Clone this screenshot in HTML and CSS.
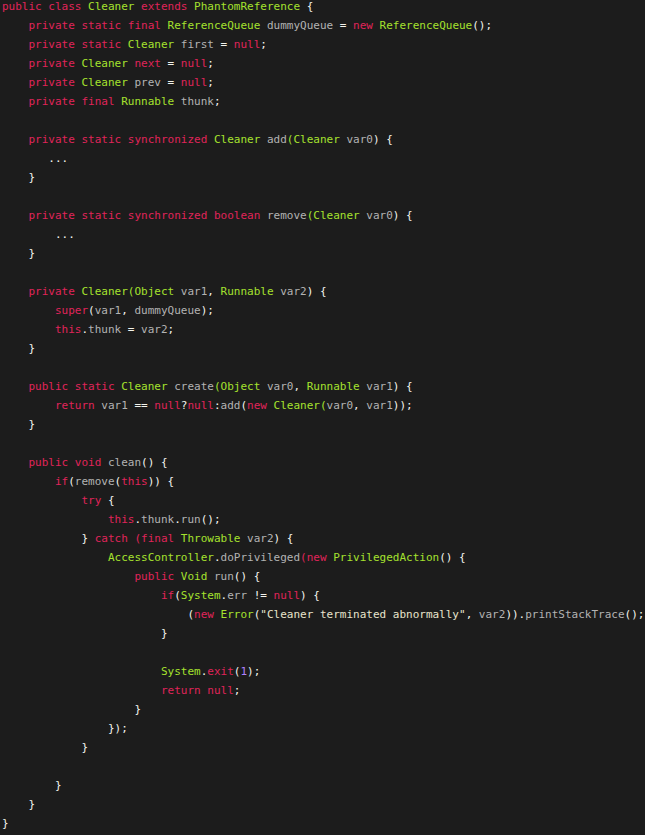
FILE: index.html
```html
<!DOCTYPE html>
<html>
<head>
<meta charset="utf-8">
<link rel="stylesheet" href="styles.css">
</head>
<body>
<pre class="code"><span class="k">public class</span> <span class="t">Cleaner</span> <span class="k">extends</span> <span class="t">PhantomReference</span> <span class="p">{</span>
    <span class="k">private static final</span> <span class="t">ReferenceQueue</span> dummyQueue <span class="p">=</span> <span class="k">new</span> <span class="t">ReferenceQueue</span><span class="p">();</span>
    <span class="k">private static</span> <span class="t">Cleaner</span> first <span class="p">=</span> <span class="k">null</span><span class="p">;</span>
    <span class="k">private</span> <span class="t">Cleaner</span> <span class="k">next</span> <span class="p">=</span> <span class="k">null</span><span class="p">;</span>
    <span class="k">private</span> <span class="t">Cleaner</span> prev <span class="p">=</span> <span class="k">null</span><span class="p">;</span>
    <span class="k">private final</span> <span class="t">Runnable</span> thunk<span class="p">;</span>

    <span class="k">private static synchronized</span> <span class="t">Cleaner</span> add<span class="t">(Cleaner</span> var0<span class="p">) {</span>
       <span class="p">...</span>
    <span class="p">}</span>

    <span class="k">private static synchronized boolean</span> remove<span class="t">(Cleaner</span> var0<span class="p">) {</span>
        <span class="p">...</span>
    <span class="p">}</span>

    <span class="k">private</span> <span class="t">Cleaner(Object</span> var1<span class="p">,</span> <span class="t">Runnable</span> var2<span class="p">) {</span>
        <span class="k">super</span><span class="p">(</span>var1<span class="p">,</span> dummyQueue<span class="p">);</span>
        <span class="k">this</span><span class="p">.</span>thunk <span class="p">=</span> var2<span class="p">;</span>
    <span class="p">}</span>

    <span class="k">public static</span> <span class="t">Cleaner</span> create<span class="t">(Object</span> var0<span class="p">,</span> <span class="t">Runnable</span> var1<span class="p">) {</span>
        <span class="k">return</span> var1 <span class="p">==</span> <span class="k">null</span><span class="p">?</span><span class="k">null</span><span class="p">:</span>add<span class="p">(</span><span class="k">new</span> <span class="t">Cleaner(</span>var0<span class="p">,</span> var1<span class="p">));</span>
    <span class="p">}</span>

    <span class="k">public void</span> clean<span class="p">() {</span>
        <span class="k">if</span><span class="p">(</span>remove<span class="p">(</span><span class="k">this</span><span class="p">)) {</span>
            <span class="k">try</span> <span class="p">{</span>
                <span class="k">this</span><span class="p">.</span>thunk<span class="p">.</span>run<span class="p">();</span>
            <span class="p">}</span> <span class="k">catch (final</span> <span class="t">Throwable</span> var2<span class="p">) {</span>
                <span class="t">AccessController</span><span class="p">.</span>doPrivileged<span class="k">(new</span> <span class="t">PrivilegedAction</span><span class="p">() {</span>
                    <span class="k">public</span> <span class="t">Void</span> run<span class="p">() {</span>
                        <span class="k">if</span><span class="p">(</span><span class="t">System</span><span class="p">.</span>err <span class="p">!=</span> <span class="k">null</span><span class="p">) {</span>
                            <span class="p">(</span><span class="k">new</span> <span class="t">Error</span><span class="p">(</span><span class="s">"Cleaner terminated abnormally"</span><span class="p">,</span> var2<span class="p">)).</span>printStackTrace<span class="p">();</span>
                        <span class="p">}</span>

                        <span class="t">System</span><span class="p">.</span><span class="k">exit</span><span class="p">(</span><span class="n">1</span><span class="p">);</span>
                        <span class="k">return null</span><span class="p">;</span>
                    <span class="p">}</span>
                <span class="p">});</span>
            <span class="p">}</span>

        <span class="p">}</span>
    <span class="p">}</span>
<span class="p">}</span></pre>
</body>
</html>
```
FILE: styles.css
```css
html, body {
  margin: 0;
  padding: 0;
  background: #1c1c1c;
  overflow: hidden;
}
.code {
  margin: -3px 0 0 0;
  padding: 0 0 0 2px;
  font-family: "DejaVu Sans Mono", "Liberation Mono", monospace;
  font-size: 11px;
  line-height: 19px;
  color: #b3b3b3;
  white-space: pre;
}
.k { color: #e0245a; }
.t { color: #a6e22e; }
.p { color: #f4f4ee; }
.n { color: #ae81ff; }
.s { color: #e8e4cc; }
```
